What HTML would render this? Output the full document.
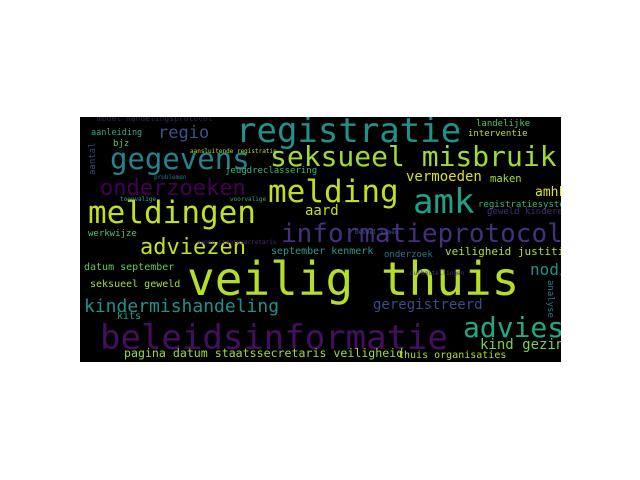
<!DOCTYPE html>
<html><head><meta charset="utf-8"><style>
html,body{margin:0;padding:0;background:#fff;width:640px;height:480px;overflow:hidden}
#c{position:absolute;left:80px;top:117px;width:481px;height:245px;background:#000;overflow:hidden}
#c span{position:absolute;white-space:nowrap;line-height:1;font-family:"DejaVu Sans Mono","Liberation Mono",monospace}
</style></head><body>
<div id="c">
<span style="left:156px;top:-3px;font-size:34px;color:#21918c">registratie</span>
<span style="left:107px;top:139px;font-size:46px;color:#b5de2b">veilig thuis</span>
<span style="left:20px;top:204px;font-size:34px;color:#440f5e">beleidsinformatie</span>
<span style="left:201px;top:104px;font-size:26px;color:#46307e">informatieprotocol</span>
<span style="left:30px;top:28px;font-size:29px;color:#26828e">gegevens</span>
<span style="left:190px;top:26px;font-size:28px;color:#a0da39">seksueel misbruik</span>
<span style="left:188px;top:60px;font-size:31px;color:#bddf26">melding</span>
<span style="left:333px;top:68px;font-size:34px;color:#1fa088">amk</span>
<span style="left:8px;top:81px;font-size:31px;color:#c2df23">meldingen</span>
<span style="left:20px;top:61px;font-size:22px;color:#440154">onderzoeken</span>
<span style="left:78px;top:8px;font-size:17px;color:#3b528b">regio</span>
<span style="left:11px;top:12px;font-size:8.5px;color:#3aa97f">aanleiding</span>
<span style="left:33px;top:23px;font-size:9px;color:#5ec962">bjz</span>
<span style="left:17px;top:-2px;font-size:8px;color:#2c2852">model handelingsprotocol</span>
<span style="left:145px;top:50px;font-size:9px;color:#35b779">jeugdreclassering</span>
<span style="left:225px;top:87px;font-size:14px;color:#c2df23">aard</span>
<span style="left:8px;top:113px;font-size:9px;color:#52c569">werkwijze</span>
<span style="left:60px;top:120px;font-size:22px;color:#c8e020">adviezen</span>
<span style="left:191px;top:130px;font-size:10px;color:#2a9a8a">september kenmerk</span>
<span style="left:4px;top:146px;font-size:10px;color:#5ec962">datum september</span>
<span style="left:10px;top:163px;font-size:10px;color:#a5db36">seksueel geweld</span>
<span style="left:4px;top:181px;font-size:18px;color:#21918c">kindermishandeling</span>
<span style="left:37px;top:195px;font-size:10px;color:#26a08a">kits</span>
<span style="left:44px;top:231px;font-size:11.6px;color:#a0da39">pagina datum staatssecretaris veiligheid</span>
<span style="left:293px;top:181px;font-size:14px;color:#3e4a89">geregistreerd</span>
<span style="left:383px;top:197px;font-size:28px;color:#22a884">advies</span>
<span style="left:400px;top:221px;font-size:14px;color:#7ad151">kind gezin</span>
<span style="left:318px;top:234px;font-size:10px;color:#addc30">thuis organisaties</span>
<span style="left:365px;top:129px;font-size:11px;color:#b5de2b">veiligheid justitie</span>
<span style="left:304px;top:134px;font-size:9px;color:#2a788e">onderzoek</span>
<span style="left:450px;top:145px;font-size:16px;color:#21918c">nodig</span>
<span style="left:326px;top:53px;font-size:14px;color:#d8e219">vermoeden</span>
<span style="left:410px;top:57px;font-size:10.5px;color:#a5db36">maken</span>
<span style="left:455px;top:69px;font-size:13px;color:#dde318">amhk</span>
<span style="left:398px;top:84px;font-size:9px;color:#35b779">registratiesystemen</span>
<span style="left:407px;top:91px;font-size:9px;color:#482878">geweld kinderen</span>
<span style="left:396px;top:3px;font-size:9px;color:#52c569">landelijke</span>
<span style="left:388px;top:13px;font-size:9px;color:#b5de2b">interventie</span>
<span style="left:9px;top:58px;font-size:9px;color:#2c4a7e;transform:rotate(-90deg);transform-origin:0 0">aantal</span>
<span style="left:474px;top:163px;font-size:9px;color:#2a788e;transform:rotate(90deg);transform-origin:0 0">analyse</span>
<span style="left:74px;top:58px;font-size:6px;color:#2a788e">problemen</span>
<span style="left:110px;top:32px;font-size:6px;color:#b5de2b">aansluitende registratie</span>
<span style="left:150px;top:80px;font-size:6px;color:#3aa97f">voorvalige</span>
<span style="left:40px;top:80px;font-size:6px;color:#3aa97f">toonvalige</span>
<span style="left:117px;top:123px;font-size:6px;color:#482878">samen staatssecretaris</span>
<span style="left:275px;top:113px;font-size:6px;color:#3b528b">beveel samen</span>
<span style="left:330px;top:154px;font-size:6px;color:#46307e">dubbeltellingen</span>
</div>
</body></html>
